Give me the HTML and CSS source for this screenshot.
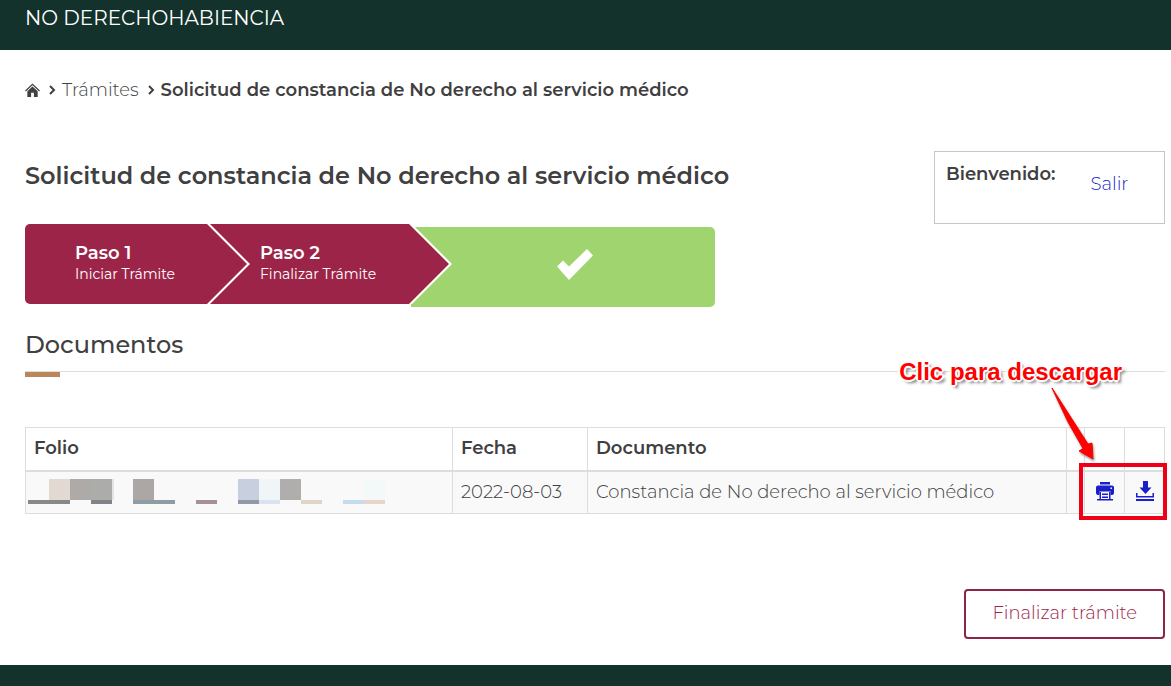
FILE: index.html
```html
<!DOCTYPE html>
<html lang="es">

<head>
    <meta charset="UTF-8">
    <meta name="viewport" content="width=device-width, initial-scale=1.0">
    <title>Solicitud de constancia de No derecho al servicio médico</title>
    <link rel="stylesheet" href="styles.css">
</head>

<body>
    <header class="topbar">NO DERECHOHABIENCIA</header>

    <main class="container">
        <nav class="breadcrumb">
            <a href="#" aria-label="Inicio">
                <svg class="icon-home" viewBox="0 0 16 16" width="15" height="15">
                    <path d="M0.5 8.5 8 1.5l7.5 7" fill="none" stroke="#404041" stroke-width="1.3" />
                    <path d="M8 3.6 2.5 8.8V15h4v-4.5h3V15h4V8.8z" fill="#404041" />
                </svg>
            </a>
            <svg class="icon-sep" viewBox="0 0 7 10" width="7" height="10"><path d="M1 1l4 4-4 4" /></svg>
            <a href="#">Trámites</a>
            <svg class="icon-sep" viewBox="0 0 7 10" width="7" height="10"><path d="M1 1l4 4-4 4" /></svg>
            <strong>Solicitud de constancia de No derecho al servicio médico</strong>
        </nav>

        <div class="heading">
            <div class="heading-main">
                <h1>Solicitud de constancia de No derecho al servicio médico</h1>
                <ol class="steps">
                    <li class="step">
                        <strong>Paso 1</strong>
                        <span>Iniciar Trámite</span>
                    </li>
                    <li class="step">
                        <strong>Paso 2</strong>
                        <span>Finalizar Trámite</span>
                    </li>
                    <li class="step-done">
                        <svg viewBox="0 0 36 31" width="36" height="31">
                            <path d="M0 17.5 6 11.5l6 6L30 0l6 6.5L12 31z" fill="#fff" />
                        </svg>
                    </li>
                </ol>
            </div>
            <aside class="welcome">
                <strong>Bienvenido:</strong>
                <a href="#">Salir</a>
            </aside>
        </div>

        <h2>Documentos</h2>
        <hr class="rule">

        <div class="documents">
            <table class="table">
                <thead>
                    <tr>
                        <th class="col-folio">Folio</th>
                        <th class="col-fecha">Fecha</th>
                        <th>Documento</th>
                        <th class="col-empty"></th>
                        <th class="col-action"></th>
                        <th class="col-action"></th>
                    </tr>
                </thead>
                <tbody>
                    <tr>
                        <td class="cell-folio">
                            <!-- folio number hidden behind blocks -->
                            <svg class="mask" viewBox="0 0 358 25" width="358" height="25" shape-rendering="crispEdges">
                                <g>
                                    <rect x="21" width="21" height="21" fill="#e2d9d3" />
                                    <rect x="42" width="21" height="21" fill="#aeaaa8" />
                                    <rect x="63" width="21" height="21" fill="#acacab" />
                                    <rect x="84" width="2" height="21" fill="#e3e3e3" />
                                    <rect x="105" width="21" height="21" fill="#aca7a4" />
                                    <rect x="210" width="21" height="21" fill="#c8d0df" />
                                    <rect x="231" width="21" height="21" fill="#f0f6f8" />
                                    <rect x="252" width="21" height="21" fill="#b0aead" />
                                    <rect x="336" width="21" height="21" fill="#f3f8f8" />
                                </g>
                                <g>
                                    <rect y="21" width="42" height="4" fill="#878988" />
                                    <rect x="63" y="21" width="21" height="4" fill="#808486" />
                                    <rect x="105" y="21" width="42" height="4" fill="#8e9da5" />
                                    <rect x="168" y="21" width="21" height="4" fill="#a69198" />
                                    <rect x="210" y="21" width="21" height="4" fill="#9199a6" />
                                    <rect x="231" y="21" width="21" height="4" fill="#d9e3f4" />
                                    <rect x="273" y="21" width="21" height="4" fill="#e3d4c8" />
                                    <rect x="315" y="21" width="21" height="4" fill="#c6dcea" />
                                    <rect x="336" y="21" width="21" height="4" fill="#ead5cd" />
                                </g>
                            </svg>
                        </td>
                        <td>2022-08-03</td>
                        <td>Constancia de No derecho al servicio médico</td>
                        <td></td>
                        <td class="cell-action">
                            <a href="#" aria-label="Imprimir">
                                <svg viewBox="0 0 18 19" width="18" height="19" fill="#1a1fc8">
                                    <path d="M4 0h10v2.5H4z" />
                                    <path d="M2 3.5h14q2 0 2 2V11q0 2-2 2h-1.5V9.5h-11V13H2q-2 0-2-2V5.5q0-2 2-2zM14.5 5.5V7H16V5.5z" fill-rule="evenodd" />
                                    <path d="M3.5 10H5v7h8v-7h1.5v7H17v1.5H1V17h2.5zM6 11.5h6V13H6zM6 14.5h6V16H6z" />
                                </svg>
                            </a>
                        </td>
                        <td class="cell-action">
                            <a href="#" aria-label="Descargar">
                                <svg viewBox="0 0 18 20" width="18" height="20" fill="#1a1fc8">
                                    <path d="M7 0h5v6.5h3.5l-6 6.5-6-6.5H7z" />
                                    <path d="M0 12h1.5v3h15v-3H18v4.5H0zM0 18h18v2H0z" />
                                </svg>
                            </a>
                        </td>
                    </tr>
                </tbody>
            </table>

            <div class="callout-box"></div>
            <p class="callout-text">Clic para descargar</p>
            <svg class="callout-arrow" viewBox="0 0 50 76" width="50" height="76">
                <path d="M3 1 39 57l4-1 1 16-14-8 4-2.5L19 35z" fill="#f00" stroke="#f00" stroke-linejoin="round" />
            </svg>
        </div>

        <div class="actions">
            <button type="button" class="btn">Finalizar trámite</button>
        </div>
    </main>

    <footer class="footer"></footer>
</body>

</html>
```
FILE: styles.css
```css
* {
    margin: 0;
    padding: 0;
    box-sizing: border-box;
}

body {
    display: flex;
    flex-direction: column;
    min-height: 100vh;
    font-family: Montserrat, Inter, "Open Sans", sans-serif;
    font-size: 18px;
    font-weight: 300;
    line-height: 26px;
    color: #404041;
    background: #fff;
}

a {
    color: inherit;
    text-decoration: none;
}

strong {
    font-weight: 600;
}

.topbar {
    height: 50px;
    padding: 5px 25px;
    background: #13322b;
    color: #fff;
    font-size: 20px;
    font-weight: 400;
}

.container {
    padding: 27px 6px 26px 25px;
}

.breadcrumb {
    display: flex;
    align-items: center;
}

.breadcrumb a:first-child {
    display: flex;
}

.icon-sep {
    margin: 0 6px 0 9px;
    fill: none;
    stroke: #404041;
    stroke-width: 2;
}

/* heading, steps and session box */
.heading {
    display: flex;
    justify-content: space-between;
    align-items: flex-start;
    margin-top: 48px;
}

h1,
h2 {
    font-size: 24px;
    font-weight: 500;
    line-height: 32px;
}

h1 {
    margin-top: 9px;
    font-weight: 600;
}

.steps {
    display: flex;
    width: 690px;
    margin-top: 32px;
    list-style: none;
}

.step {
    position: relative;
    display: flex;
    flex-direction: column;
    width: 202px;
    height: 80px;
    padding: 18px 0 0 53px;
    background: #9d2449;
    color: #fff;
    line-height: 22px;
}

.step:first-child {
    width: 182px;
    padding-left: 50px;
    border-radius: 5px 0 0 5px;
    z-index: 2;
}

.step:nth-child(2) {
    z-index: 1;
}

.step span {
    font-size: 14px;
    font-weight: 400;
    line-height: 20px;
}

/* white chevron with the step colour on top of it */
.step::before,
.step::after {
    content: "";
    position: absolute;
    top: 0;
    left: 100%;
    width: 43px;
    height: 80px;
    background: #fff;
    clip-path: polygon(0 0, 3px 0, 100% 50%, 3px 100%, 0 100%);
}

.step::after {
    width: 40px;
    background: #9d2449;
    clip-path: polygon(0 0, 100% 50%, 0 100%);
}

.step-done {
    display: flex;
    flex: 1;
    align-items: center;
    justify-content: center;
    height: 80px;
    margin: 3px 0 0 2px;
    padding: 0 0 6px 24px;
    border-radius: 0 5px 5px 0;
    background: #a0d46f;
}

.welcome {
    display: flex;
    gap: 35px;
    width: 231px;
    height: 73px;
    padding: 9px 11px;
    border: 1px solid #c4c6c8;
}

.welcome a {
    padding-top: 10px;
    color: #1a1fc8;
}

h2 {
    margin-top: 22px;
}

.rule {
    height: 6px;
    margin-top: 10px;
    border: 0;
    border-top: 1px solid #ddd;
    background: linear-gradient(#ba865a, #ba865a) no-repeat 0 0 / 35px 5px;
}

/* documents table */
.documents {
    position: relative;
    margin-top: 50px;
}

.table {
    width: 100%;
    border-collapse: collapse;
    table-layout: fixed;
    line-height: 24px;
}

.table th,
.table td {
    height: 43px;
    padding: 7px 8px 8px;
    border: 1px solid #ddd;
    text-align: left;
}

.table th {
    border-bottom-width: 2px;
    font-weight: 600;
}

.table td {
    background: #f9f9f9;
}

.col-folio {
    width: 427px;
}

.col-fecha {
    width: 135px;
}

.col-empty {
    width: 18px;
}

.col-action {
    width: 40px;
}

.table .cell-folio {
    padding: 0 2px 2px;
}

.mask {
    display: block;
}

.table .cell-action {
    padding: 0 0 2px;
}

.cell-action a {
    display: flex;
    justify-content: center;
}

/* red note over the table */
.callout-box {
    position: absolute;
    top: 36px;
    right: -2px;
    width: 88px;
    height: 57px;
    border: 4px solid #ee0018;
}

.callout-text {
    position: absolute;
    top: -68px;
    right: 43px;
    font-family: "Liberation Sans", Arial, sans-serif;
    font-size: 24px;
    font-weight: 700;
    color: #f00;
    white-space: nowrap;
    text-shadow: -2px 0 #fff, 2px 0 #fff, 0 -2px #fff, 0 2px #fff, -1px -1px #fff, 1px 1px #fff, -1px 1px #fff, 1px -1px #fff, 3px 3px 3px #777;
}

.callout-arrow {
    position: absolute;
    top: -40px;
    right: 66px;
    filter: drop-shadow(1px 2px 1px rgba(0, 0, 0, .4));
}

.actions {
    display: flex;
    justify-content: flex-end;
    margin-top: 75px;
}

.btn {
    padding: 9px 26px 11px;
    border: 2px solid #8a2649;
    border-radius: 4px;
    background: #fff;
    color: #9d2449;
    font: inherit;
    cursor: pointer;
}

.footer {
    flex: 1;
    background: #13322b;
}
```
